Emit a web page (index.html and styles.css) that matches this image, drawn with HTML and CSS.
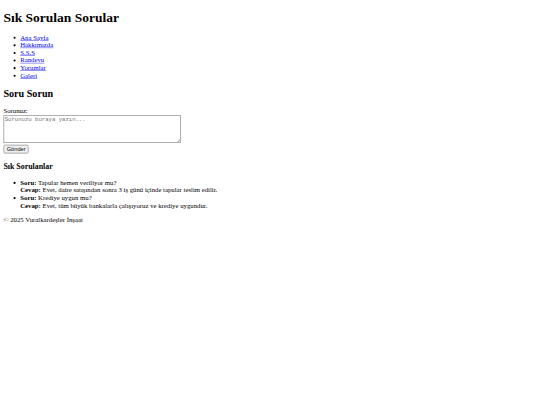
FILE: index.html
```html
<!DOCTYPE html>
<html lang="tr">
<head>
<meta charset="utf-8">
<title>Sık Sorulan Sorular</title>
<link rel="stylesheet" href="styles.css">
</head>
<body class="body">
<div class="page">
<header>
<h1 class="title">Sık Sorulan Sorular</h1>
<nav>
<ul class="menu">
<li><a href="#">Ana Sayfa</a></li>
<li><a href="#">Hakkımızda</a></li>
<li><a href="#">S.S.S</a></li>
<li><a href="#">Randevu</a></li>
<li><a href="#">Yorumlar</a></li>
<li><a href="#">Galeri</a></li>
</ul>
</nav>
</header>
<main>
<section>
<h2 class="subtitle">Soru Sorun</h2>
<form class="ask">
<label for="q">Sorunuz:</label><br>
<textarea id="q" class="question" rows="4" cols="50" placeholder="Sorunuzu buraya yazın..."></textarea><br>
<button type="button" class="send">Gönder</button>
</form>
</section>
<section>
<h3 class="faq-title">Sık Sorulanlar</h3>
<ul class="faq">
<li><strong>Soru:</strong> Tapular hemen veriliyor mu?<br><strong>Cevap:</strong> Evet, daire satışından sonra 3 iş günü içinde tapular teslim edilir.</li>
<li><strong>Soru:</strong> Krediye uygun mu?<br><strong>Cevap:</strong> Evet, tüm büyük bankalarla çalışıyoruz ve krediye uygundur.</li>
</ul>
</section>
</main>
<footer>
<p class="copy">© 2025 Vuralkardeşler İnşaat</p>
</footer>
</div>
</body>
</html>
```

FILE: styles.css
```css
.body {
  margin: 0;
  height: 405px;
  overflow: hidden;
  font-family: "Liberation Serif", serif;
}
.page {
  box-sizing: border-box;
  width: 1280px;
  padding: 8px;
  transform: scale(0.421875);
  transform-origin: 0 0;
}
.title {
  margin-top: 14px;
}
.question {
  font-family: "Liberation Mono", monospace;
  border: 2px solid #a0a0a0;
  padding: 1px;
}
.send {
  font-family: "Liberation Sans", sans-serif;
  border: 2px solid #a0a0a0;
  background: #efefef;
  border-radius: 4px;
}
```
